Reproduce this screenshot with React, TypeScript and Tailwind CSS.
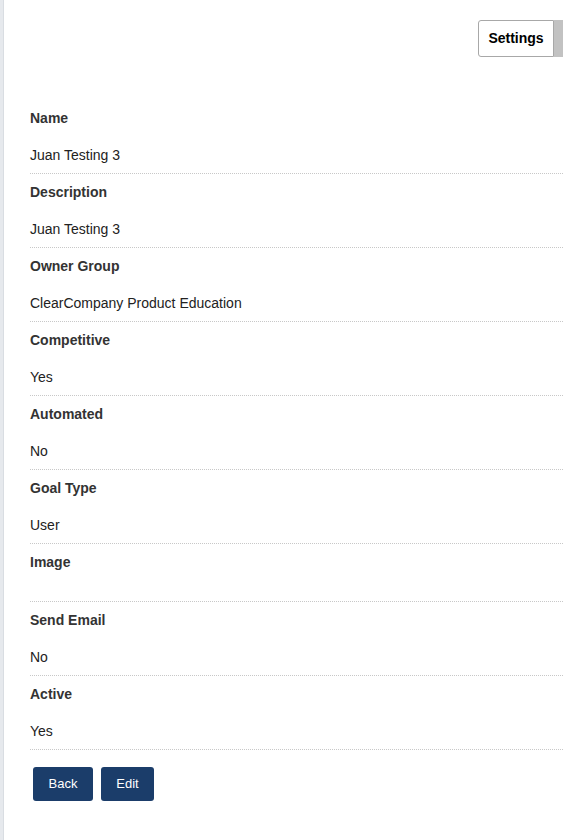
import React from "react";

const fields: { label: string; value: string }[] = [
  { label: "Name", value: "Juan Testing 3" },
  { label: "Description", value: "Juan Testing 3" },
  { label: "Owner Group", value: "ClearCompany Product Education" },
  { label: "Competitive", value: "Yes" },
  { label: "Automated", value: "No" },
  { label: "Goal Type", value: "User" },
  { label: "Image", value: "" },
  { label: "Send Email", value: "No" },
  { label: "Active", value: "Yes" },
];

export default function App() {
  return (
    <div
      className="flex min-h-[840px] w-full overflow-hidden bg-white text-[14px] text-[#333]"
      style={{ fontFamily: '"Liberation Sans", Arial, Helvetica, sans-serif' }}
    >
      <div className="w-[4px] shrink-0 bg-[#e6e9ed] border-r border-[#d9dde2]" />
      <div className="flex min-w-0 flex-1 flex-col">
        <div className="flex justify-end pt-[20px]">
          <div className="flex h-[37px]">
            <button className="flex h-[37px] w-[76px] items-center justify-center rounded-l-[3px] border border-[#a8a8a8] bg-white text-[14px] font-bold text-black">
              Settings
            </button>
            <div className="h-[37px] w-[9px] bg-[#c2c2c2]" />
          </div>
        </div>
        <div className="mt-[43px] pl-[26px]">
          {fields.map((f) => (
            <div key={f.label} className="border-b border-dotted border-[#c8c8c8]">
              <div className="pt-[8px] pb-[8px] text-[14px] font-bold leading-[20px] text-[#333]">
                {f.label}
              </div>
              <div className="pt-[9px] pb-[8px] leading-[20px] text-[#222]">
                {f.value ? f.value : <div className="h-[4px]" />}
              </div>
            </div>
          ))}
          <div className="flex gap-[8px] pt-[17px] pl-[3px]">
            <button className="h-[34px] w-[60px] rounded-[3px] bg-[#1b3d6a] text-[13px] text-white">
              Back
            </button>
            <button className="h-[34px] w-[53px] rounded-[3px] bg-[#1b3d6a] text-[13px] text-white">
              Edit
            </button>
          </div>
        </div>
      </div>
    </div>
  );
}
